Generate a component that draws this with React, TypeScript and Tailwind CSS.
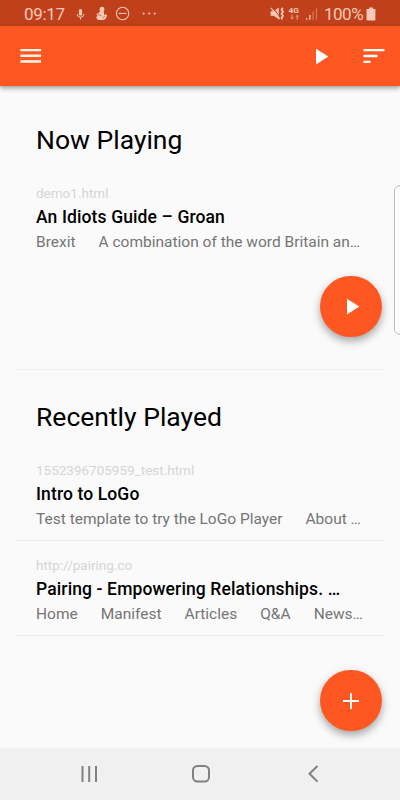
import React from 'react';
import { MdMenu, MdMic, MdPlayArrow, MdSort } from 'react-icons/md';

interface Guide {
  url: string;
  title: string;
  sections: string[];
}

const nowPlaying: Guide = {
  url: 'demo1.html',
  title: 'An Idiots Guide – Groan',
  sections: ['Brexit', 'A combination of the word Britain an…'],
};

const recentlyPlayed: Guide[] = [
  {
    url: '1552396705959_test.html',
    title: 'Intro to LoGo',
    sections: ['Test template to try the LoGo Player', 'About …'],
  },
  {
    url: 'http://pairing.co',
    title: 'Pairing - Empowering Relationships. …',
    sections: ['Home', 'Manifest', 'Articles', 'Q&A', 'News…'],
  },
];

function StatusBar() {
  return (
    <div className="h-[26px] bg-[#bf401a] text-[#f9c9b8] flex items-center pl-6 pr-[24px] pt-[2px]">
      <span className="text-[17px] leading-6 w-[42px] whitespace-nowrap tracking-[-0.3px]">09:17</span>
      <MdMic className="w-[13px] h-[13px] ml-[8px]" />
      {/* Do not disturb, notification and overflow dots */}
      <svg className="ml-[9px]" width="62" height="16" viewBox="0 0 62 16" fill="currentColor">
        <circle cx="6" cy="3.2" r="2.4" />
        <path d="M3.6 5.2 7.6 4.6 8.2 9.2l1.6-1.2 1.3 1.6-1.6 3.4c-2 1.4-6 1.4-8.4.2L.2 11.2l1.4-1.4L.2 8l2.8-.9z" />
        <path d="m1.6 8.4 3.8 1.3M6.6 12.2l2-2" stroke="#bf401a" strokeWidth=".7" />
        <circle cx="26.6" cy="7.5" r="6.2" fill="none" stroke="currentColor" strokeWidth="1.1" />
        <path d="M22.7 6.9h7.8V8h-7.8z" />
        <circle cx="47.6" cy="7.5" r="1" />
        <circle cx="53.2" cy="7.5" r="1" />
        <circle cx="58.7" cy="7.5" r="1" />
      </svg>
      <div className="ml-auto flex items-center">
        {/* Muted with vibration, 4G data, signal strength */}
        <svg width="50" height="16" viewBox="0 0 50 16" fill="currentColor">
          <path d="M.6 5.2h3L8.8 1.6v11.6L3.6 9.8h-3z" />
          <path d="m2.2.9 7.4 9.4" stroke="#bf401a" strokeWidth="1" />
          <path d="m1 1.8 8.8 11.4" stroke="currentColor" strokeWidth="1.2" />
          <path d="m12.8 1.8-1.3 2 1.6 2-1.6 2 1.6 2-1.6 2 .8 1.6" fill="none" stroke="currentColor" strokeWidth="1.7" />
          <text x="18.6" y="7" fontSize="8" fontWeight="700" textLength="10.4" lengthAdjust="spacingAndGlyphs">4G</text>
          <path d="M21.4 8.5v3h-1.3l2 2.3 2-2.3h-1.3v-3zM26.5 13.7v-3h-1.3l2-2.3 2 2.3h-1.3v3z" opacity=".55" />
          <path d="M36 12h1.3v1.8H36z" />
          <path d="M39.2 9h1.3v4.8h-1.3z" />
          <path d="M42.4 5.5h1.3v8.3h-1.3zM45.8 2.2h1.3v11.6h-1.3z" opacity=".4" />
        </svg>
        <span className="text-[17px] leading-6 w-[42px] ml-[4px] whitespace-nowrap tracking-[-0.5px]">100%</span>
        <svg width="10" height="14" viewBox="0 0 10 14" fill="currentColor">
          <path d="M3 .5h4v1.4h2.4v10.6q0 1-1 1H1.5q-1 0-1-1V1.9H3z" />
        </svg>
      </div>
    </div>
  );
}

function AppBar() {
  return (
    <header className="relative h-[60px] bg-[#ff5722] text-[#fff6e8] flex items-center justify-between pl-[17px] pr-[12.5px] shadow-[0_2px_5px_rgba(0,0,0,0.4)]">
      <MdMenu className="w-[27.5px] h-[27.5px]" />
      <div className="flex items-center gap-[26px] text-white">
        <MdPlayArrow className="w-[27px] h-[27px]" />
        <MdSort className="w-7 h-7" />
      </div>
    </header>
  );
}

function GuideRow({ guide }: { guide: Guide }) {
  return (
    <div className="px-5 whitespace-nowrap">
      <div className="text-[13.5px] leading-[22px] text-[#d5d5d5]">{guide.url}</div>
      <div className="text-[17.5px] leading-[26px] font-medium text-black tracking-[0.12px]">{guide.title}</div>
      <div className="flex gap-[23px] text-[15.5px] leading-6 text-[#757575]">
        {guide.sections.map((section) => (
          <span key={section}>{section}</span>
        ))}
      </div>
    </div>
  );
}

function Fab({ label, children }: { label: string; children: React.ReactNode }) {
  return (
    <button
      aria-label={label}
      className="w-[62px] h-[61px] rounded-full bg-[#ff5722] text-white flex items-center justify-center shadow-[0_4px_8px_rgba(0,0,0,0.35)]"
    >
      {children}
    </button>
  );
}

function NavBar() {
  return (
    <nav className="h-[52px] bg-[#f0f0f0] flex items-center justify-center text-[#808080]">
      <svg width="240" height="20" viewBox="0 0 240 20" fill="none" stroke="currentColor" strokeWidth="2">
        <path d="M2.5 2v16M9.2 2v16M16 2v16" />
        <rect x="113" y="2" width="16" height="15.5" rx="4.5" />
        <path d="m237.5 2-8 7.8 8 7.8" />
      </svg>
    </nav>
  );
}

export default function App() {
  return (
    <div className="relative w-[400px] h-[800px] bg-[#fafafa] flex flex-col overflow-hidden font-['Roboto',sans-serif]">
      <StatusBar />
      <AppBar />

      <main className="flex-1 px-4 flex flex-col">
        <section className="h-[284px] pt-[38px] border-b border-[#f0f0f0] flex flex-col">
          <h1 className="px-5 text-[26.5px] leading-8 text-black mb-[26px]">Now Playing</h1>
          <GuideRow guide={nowPlaying} />
          <div className="self-end mr-[2px] mt-[22px]">
            <Fab label="Play">
              <MdPlayArrow className="w-[27px] h-[27px]" />
            </Fab>
          </div>
        </section>

        <section className="pt-[31px]">
          <h1 className="px-5 text-[26.5px] leading-8 text-black mb-[13px]">Recently Played</h1>
          {recentlyPlayed.map((guide) => (
            <div key={guide.url} className="pt-[13px] pb-[9px] border-b border-[#eeeeee]">
              <GuideRow guide={guide} />
            </div>
          ))}
        </section>

        <div className="self-end mt-auto mr-[2px] mb-[17px]">
          <Fab label="Add">
            <svg width="16" height="16" viewBox="0 0 16 16" fill="none" stroke="currentColor" strokeWidth="1.9">
              <path d="M8 0v16M0 8h16" />
            </svg>
          </Fab>
        </div>
      </main>

      <NavBar />

      {/* Edge panel handle */}
      <div className="absolute left-[394px] top-[185px] w-5 h-[150px] rounded-[6px] border border-[#bdbdbd] bg-[#fdfdfd]" />
    </div>
  );
}
